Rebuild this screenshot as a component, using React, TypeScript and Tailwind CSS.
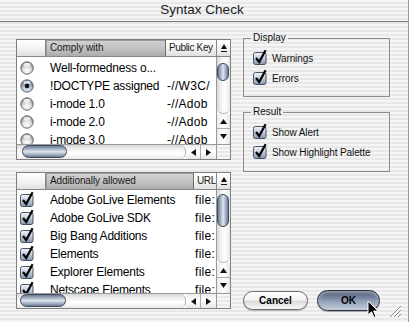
import React from "react";

const STRIPES =
  "bg-[repeating-linear-gradient(180deg,#f5f5f5_0px,#f5f5f5_2px,#e8e8e8_2px,#e8e8e8_4px)]";

function Tri({ dir }: { dir: "up" | "down" | "left" | "right" }) {
  const vertical = dir === "up" || dir === "down";
  const d =
    dir === "up"
      ? "M0 5 L3.5 0 L7 5 Z"
      : dir === "down"
      ? "M0 0 L7 0 L3.5 5 Z"
      : dir === "left"
      ? "M5 0 L5 7 L0 3.5 Z"
      : "M0 0 L5 3.5 L0 7 Z";
  const w = vertical ? 7 : 5;
  const h = vertical ? 5 : 7;
  return (
    <svg width={w} height={h} viewBox={`0 0 ${w} ${h}`}>
      <path d={d} fill="#111" />
    </svg>
  );
}

function SortIcon() {
  return (
    <svg width="8" height="10" viewBox="0 0 8 10">
      <path d="M4 1 L7 6 L1 6 Z" fill="#111" />
      <rect x="1" y="8" width="6" height="1" fill="#111" />
    </svg>
  );
}

function Radio({ checked }: { checked?: boolean }) {
  return (
    <svg width="14" height="14" viewBox="0 0 14 14">
      <defs>
        <radialGradient id="rgr" cx="50%" cy="70%" r="60%">
          <stop offset="0" stopColor="#ffffff" />
          <stop offset="0.55" stopColor="#dedede" />
          <stop offset="1" stopColor="#8f8f8f" />
        </radialGradient>
        <radialGradient id="rgs" cx="50%" cy="70%" r="60%">
          <stop offset="0" stopColor="#e8eef6" />
          <stop offset="0.55" stopColor="#b7c3d4" />
          <stop offset="1" stopColor="#66758c" />
        </radialGradient>
      </defs>
      <circle
        cx="7"
        cy="7"
        r="6.2"
        fill={checked ? "url(#rgs)" : "url(#rgr)"}
        stroke="#6a6a6a"
        strokeWidth="1"
      />
      <ellipse cx="7" cy="3.6" rx="3.6" ry="1.8" fill="#ffffff" opacity="0.75" />
      {checked && <circle cx="7" cy="7" r="2.4" fill="#151515" />}
    </svg>
  );
}

function Check() {
  return (
    <svg width="15" height="16" viewBox="0 0 15 16" className="shrink-0">
      <defs>
        <linearGradient id="cbg" x1="0" y1="0" x2="0" y2="1">
          <stop offset="0" stopColor="#f2f5fa" />
          <stop offset="0.45" stopColor="#c7d1de" />
          <stop offset="1" stopColor="#8594aa" />
        </linearGradient>
      </defs>
      <rect x="0.5" y="3.5" width="12.5" height="12" rx="2" fill="url(#cbg)" stroke="#475265" />
      <path
        d="M3 9 L6.2 13 L12.6 1.2"
        fill="none"
        stroke="#050505"
        strokeWidth="2.3"
        strokeLinejoin="miter"
      />
    </svg>
  );
}

function VScroll({ thumb }: { thumb: string }) {
  return (
    <div className="w-[14px] shrink-0 flex flex-col border-l border-[#9a9a9a] bg-white">
      <div className="relative flex-1 rounded-b-[6px] border-b border-[#b5b5b5] bg-[linear-gradient(90deg,#d6d6d6,#f1f1f1_30%,#ffffff_60%,#eaeaea)]">
        <div
          className={`absolute left-0 w-[12px] rounded-full border border-[#3f4a5d] bg-[linear-gradient(90deg,#6b7a92,#a8b4c6_28%,#dfe5ee_52%,#9ba8bc_80%,#6c7b93)] ${thumb}`}
        />
      </div>
      <div className="h-[15px] flex items-center justify-center border-b border-[#acacac] bg-[linear-gradient(90deg,#ececec,#ffffff_50%,#e6e6e6)]">
        <Tri dir="up" />
      </div>
      <div className="h-[15px] flex items-center justify-center bg-[linear-gradient(90deg,#ececec,#ffffff_50%,#e6e6e6)]">
        <Tri dir="down" />
      </div>
    </div>
  );
}

function HScroll({ thumb }: { thumb: string }) {
  return (
    <div className="h-[15px] shrink-0 flex border-t border-[#9a9a9a] bg-white">
      <div className="relative flex-1 rounded-r-[6px] border-r border-[#b5b5b5] bg-[linear-gradient(180deg,#d6d6d6,#f1f1f1_30%,#ffffff_60%,#eaeaea)]">
        <div
          className={`absolute top-0 h-[13px] rounded-full border border-[#3f4a5d] bg-[linear-gradient(180deg,#6b7a92,#a8b4c6_28%,#dfe5ee_52%,#9ba8bc_80%,#6c7b93)] ${thumb}`}
        />
      </div>
      <div className="w-[15px] flex items-center justify-center border-r border-[#acacac] bg-[linear-gradient(180deg,#ececec,#ffffff_50%,#e6e6e6)]">
        <Tri dir="left" />
      </div>
      <div className="w-[15px] flex items-center justify-center bg-[linear-gradient(180deg,#ececec,#ffffff_50%,#e6e6e6)]">
        <Tri dir="right" />
      </div>
      <div className={`w-[14px] border-l border-[#9a9a9a] ${STRIPES}`} />
    </div>
  );
}

function Header({ c2, c2w, c3 }: { c2: string; c2w: string; c3: string }) {
  return (
    <div className="h-[17px] shrink-0 flex border-b border-[#878787] text-[10px] leading-none text-[#1a1a1a] tracking-[-0.1px]">
      <div className="w-[29px] shrink-0 border-r border-[#878787] bg-[linear-gradient(180deg,#ffffff,#f4f4f4_50%,#e0e0e0)]" />
      <div
        className={`${c2w} shrink-0 border-r border-[#6c6c6c] bg-[linear-gradient(180deg,#d2d2d2,#c4c4c4_50%,#acacac)] shadow-[inset_1px_1px_0_#9c9c9c] flex items-center pl-[4px] whitespace-nowrap overflow-hidden`}
      >
        {c2}
      </div>
      <div className="flex-1 min-w-0 bg-[linear-gradient(180deg,#ffffff,#f4f4f4_50%,#e0e0e0)] flex items-center pl-[3px] whitespace-nowrap overflow-hidden tracking-[-0.35px]">
        {c3}
      </div>
      <div className="w-[14px] shrink-0 border-l border-[#878787] bg-[linear-gradient(180deg,#ffffff,#f4f4f4_50%,#e0e0e0)] flex items-center justify-center">
        <SortIcon />
      </div>
    </div>
  );
}

function Row({
  mark,
  name,
  extra,
  c2w,
}: {
  mark: React.ReactNode;
  name: string;
  extra: string;
  c2w: string;
}) {
  return (
    <div className="h-[18px] flex items-center whitespace-nowrap text-[12px] tracking-[-0.2px] text-black">
      <div className="w-[29px] shrink-0 pl-[3px] flex items-center">{mark}</div>
      <div className={`${c2w} shrink-0 pl-[4px] overflow-hidden`}>{name}</div>
      <div className="flex-1 min-w-0 pl-[1px] overflow-hidden tracking-[0.3px]">{extra}</div>
    </div>
  );
}

const top = [
  { name: "Well-formedness o...", extra: "", sel: false },
  { name: "!DOCTYPE assigned", extra: "-//W3C/", sel: true },
  { name: "i-mode 1.0", extra: "-//Adob", sel: false },
  { name: "i-mode 2.0", extra: "-//Adob", sel: false },
  { name: "i-mode 3.0", extra: "-//Adob", sel: false },
];

const bottom = [
  "Adobe GoLive Elements",
  "Adobe GoLive SDK",
  "Big Bang Additions",
  "Elements",
  "Explorer Elements",
  "Netscape Elements",
];

function CheckRow({ label }: { label: string }) {
  return (
    <div className="h-[20px] flex items-center gap-[4px] text-[10px] tracking-[-0.1px] text-[#111]">
      <div className="-mt-[3px]">
        <Check />
      </div>
      <span>{label}</span>
    </div>
  );
}

export default function App() {
  return (
    <div
      className={`w-[409px] h-[322px] relative overflow-hidden border-r border-[#9a9a9a] ${STRIPES} font-['Liberation_Sans',Arial,sans-serif] text-black`}
    >
      <div className="h-[22px] border-b border-[#7a7a7a] flex items-center justify-center text-[13.5px] text-[#1a1a1a] pr-[4px]">
        Syntax Check
      </div>

      <div className="flex h-[300px]">
        {/* left column */}
        <div className="pl-[16px] pt-[17px] flex flex-col gap-[12px]">
          <div className="w-[215px] h-[121px] border border-[#7f7f7f] bg-white flex flex-col">
            <Header c2="Comply with" c2w="w-[120px]" c3="Public Key" />
            <div className="flex-1 min-h-0 flex">
              <div className="flex-1 min-w-0 overflow-hidden pt-[2px]">
                {top.map((r) => (
                  <Row
                    key={r.name}
                    c2w="w-[120px]"
                    mark={<Radio checked={r.sel} />}
                    name={r.name}
                    extra={r.extra}
                  />
                ))}
              </div>
              <VScroll thumb="top-[6px] h-[18px]" />
            </div>
            <HScroll thumb="left-[5px] w-[45px]" />
          </div>

          <div className="w-[215px] h-[137px] border border-[#7f7f7f] bg-white flex flex-col">
            <Header c2="Additionally allowed" c2w="w-[148px]" c3="URL" />
            <div className="flex-1 min-h-0 flex">
              <div className="flex-1 min-w-0 overflow-hidden pt-[1px]">
                {bottom.map((n) => (
                  <Row
                    key={n}
                    c2w="w-[148px]"
                    mark={
                      <div className="-mt-[3px]">
                        <Check />
                      </div>
                    }
                    name={n}
                    extra="file:"
                  />
                ))}
              </div>
              <VScroll thumb="top-[4px] h-[33px]" />
            </div>
            <HScroll thumb="left-[3px] w-[46px]" />
          </div>
        </div>

        {/* right column */}
        <div className="ml-[12px] w-[147px] h-full flex flex-col">
          <fieldset className="mt-[10px] border border-[#8c8c8c] px-[9px] pb-[8px]">
            <legend className="-ml-[2px] px-[2px] text-[10px] leading-[12px] text-[#111]">
              Display
            </legend>
            <div className="mt-[4px]">
              <CheckRow label="Warnings" />
              <CheckRow label="Errors" />
            </div>
          </fieldset>

          <fieldset className="mt-[9px] border border-[#8c8c8c] px-[9px] pb-[9px]">
            <legend className="-ml-[2px] px-[2px] text-[10px] leading-[12px] text-[#111]">
              Result
            </legend>
            <div className="mt-[4px]">
              <CheckRow label="Show Alert" />
              <CheckRow label="Show Highlight Palette" />
            </div>
          </fieldset>

          <div className="mt-auto pb-[11px] flex items-center gap-[9px]">
            <button className="w-[65px] h-[19px] rounded-full border border-[#6d6d6d] bg-[linear-gradient(180deg,#ffffff,#f4f4f4_45%,#dcdcdc_55%,#f7f7f7)] shadow-[0_1px_1px_rgba(0,0,0,0.25)] text-[10px] font-bold text-black leading-none">
              Cancel
            </button>
            <button className="w-[63px] h-[21px] rounded-full border border-[#27303e] bg-[linear-gradient(180deg,#4e5d76,#7d8ca5_40%,#95a3b8_55%,#c4cedc)] shadow-[inset_0_2px_2px_rgba(255,255,255,0.35),0_1px_1px_rgba(0,0,0,0.3)] text-[10px] font-bold text-black leading-none">
              OK
            </button>
          </div>
        </div>
      </div>

      {/* resize grip */}
      <svg
        className="absolute right-[6px] bottom-[4px]"
        width="13"
        height="13"
        viewBox="0 0 13 13"
      >
        <path d="M12 1 L1 12" stroke="#8a8a8a" strokeWidth="1" />
        <path d="M12 5 L5 12" stroke="#8a8a8a" strokeWidth="1" />
        <path d="M12 9 L9 12" stroke="#8a8a8a" strokeWidth="1" />
        <path d="M12.5 2 L2 12.5" stroke="#ffffff" strokeWidth="1" />
        <path d="M12.5 6 L6 12.5" stroke="#ffffff" strokeWidth="1" />
      </svg>

      {/* mouse cursor */}
      <svg
        className="absolute left-[367px] top-[300px]"
        width="12"
        height="19"
        viewBox="0 0 12 19"
      >
        <path
          d="M1 1 L1 15 L4.5 11.8 L7 17.5 L9 16.6 L6.6 11 L11 11 Z"
          fill="#000"
          stroke="#fff"
          strokeWidth="1"
          strokeLinejoin="round"
        />
      </svg>
    </div>
  );
}
